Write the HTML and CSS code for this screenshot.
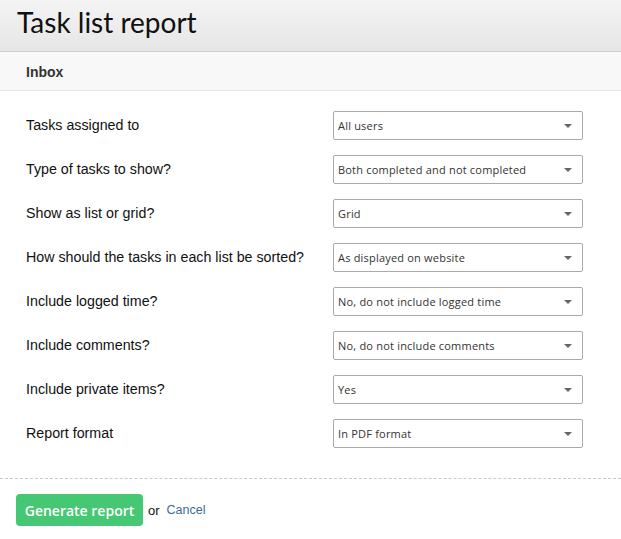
FILE: index.html
```html
<!DOCTYPE html>
<html>
<head>
<meta charset="utf-8">
<link rel="stylesheet" href="styles.css">
</head>
<body>
<div class="header"><h1 class="title">Task list report</h1></div>
<div class="subbar">Inbox</div>
<div class="form">
  <div class="row"><span class="label">Tasks assigned to</span><div class="select"><span>All users</span><i class="arrow"></i></div></div>
  <div class="row"><span class="label">Type of tasks to show?</span><div class="select"><span>Both completed and not completed</span><i class="arrow"></i></div></div>
  <div class="row"><span class="label">Show as list or grid?</span><div class="select"><span>Grid</span><i class="arrow"></i></div></div>
  <div class="row"><span class="label">How should the tasks in each list be sorted?</span><div class="select"><span>As displayed on website</span><i class="arrow"></i></div></div>
  <div class="row"><span class="label">Include logged time?</span><div class="select"><span>No, do not include logged time</span><i class="arrow"></i></div></div>
  <div class="row"><span class="label">Include comments?</span><div class="select"><span>No, do not include comments</span><i class="arrow"></i></div></div>
  <div class="row"><span class="label">Include private items?</span><div class="select"><span>Yes</span><i class="arrow"></i></div></div>
  <div class="row"><span class="label">Report format</span><div class="select"><span>In PDF format</span><i class="arrow"></i></div></div>
</div>
<div class="footer">
  <button class="btn">Generate report</button>
  <span class="or">or</span>
  <a class="cancel" href="#">Cancel</a>
</div>
</body>
</html>
```
FILE: styles.css
```css
html, body {
  margin: 0;
  padding: 0;
  background: #fff;
}
body {
  width: 621px;
  height: 539px;
  overflow: hidden;
  font-family: "Liberation Sans", Arial, sans-serif;
}
.header {
  height: 51px;
  background: linear-gradient(#f4f4f4, #e6e6e6);
  border-bottom: 1px solid #cfcfcf;
}
.title {
  margin: 0;
  padding: 5px 0 0 17px;
  font-family: "Lato", "Open Sans", sans-serif;
  font-weight: 400;
  font-size: 28px;
  line-height: 34px;
  color: #111;
}
.subbar {
  height: 38px;
  background: #f8f8f8;
  border-bottom: 1px solid #e6e6e6;
  padding-left: 26px;
  font-weight: bold;
  font-size: 14px;
  line-height: 40px;
  color: #333;
}
.form {
  padding-top: 20px;
  display: flex;
  flex-direction: column;
  gap: 15px;
}
.row {
  display: flex;
  align-items: center;
  height: 29px;
}
.label {
  width: 307px;
  padding-left: 26px;
  font-size: 14.25px;
  line-height: 16px;
  margin-top: -1px;
  color: #111;
}
.select {
  width: 250px;
  height: 29px;
  box-sizing: border-box;
  border: 1px solid #aaa;
  border-radius: 2px;
  display: flex;
  align-items: center;
  justify-content: space-between;
  padding: 0 10px 0 4px;
  font-family: "Open Sans", sans-serif;
  font-size: 11px;
  letter-spacing: 0.2px;
  color: #333;
}
.arrow {
  width: 0;
  height: 0;
  border-left: 4px solid transparent;
  border-right: 4px solid transparent;
  border-top: 4px solid #666;
}
.footer {
  margin-top: 30px;
  border-top: 1px dashed #c8c8c8;
  padding: 15px 0 0 16px;
  display: flex;
  align-items: center;
}
.btn {
  width: 127px;
  height: 32px;
  border: none;
  border-radius: 4px;
  background: #45c773;
  color: #fff;
  font-family: "Open Sans", sans-serif;
  font-weight: 600;
  font-size: 14px;
  padding: 0;
}
.or {
  margin-left: 5px;
  font-size: 13px;
  color: #111;
}
.cancel {
  margin-left: 7px;
  font-size: 12.5px;
  color: #3d6b9b;
  text-decoration: none;
}
```
